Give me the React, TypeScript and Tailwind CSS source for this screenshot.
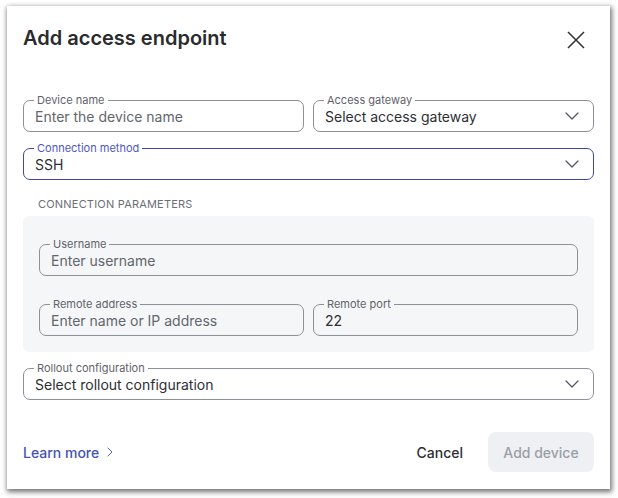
import { ChevronDown, ChevronRight } from 'lucide-react';

type FieldProps = {
  label: string;
  text: string;
  placeholder?: boolean;
  select?: boolean;
  focused?: boolean;
  bg?: string;
};

function Field({ label, text, placeholder, select, focused, bg = 'bg-white' }: FieldProps) {
  return (
    <div
      className={`relative h-8 rounded-[7px] border flex items-center pl-[11px] pr-[9px] ${
        focused ? 'border-[#3e47a6] border-[1.5px]' : 'border-[#8d9096]'
      }`}
    >
      <span
        className={`absolute left-[10px] top-[-7px] px-[3px] text-[11px] leading-[12px] ${bg} ${
          focused ? 'text-[#4d57c4]' : 'text-[#5f636a]'
        }`}
      >
        {label}
      </span>
      <span
        className={`flex-1 text-[14px] mt-[1px] ${
          placeholder ? 'text-[#62666d]' : 'text-[#2d2f33]'
        }`}
      >
        {text}
      </span>
      {select && <ChevronDown size={24} strokeWidth={1.25} className="text-[#55585e]" />}
    </div>
  );
}

export default function App() {
  return (
    <div
      className="w-[618px] h-[498px] bg-white pt-[6px] pl-[7px]"
      style={{ fontFamily: 'Inter, "Noto Sans", sans-serif' }}
    >
      <div className="w-[603px] h-[483px] bg-white px-4 flex flex-col shadow-[1px_2px_5px_1px_rgba(0,0,0,0.55)]">
        <div className="pt-[18px] h-[46px] flex items-center justify-between">
          <h2 className="text-[20px] leading-[28px] font-semibold text-[#2a2b2e]">
            Add access endpoint
          </h2>
          <button className="mr-[9px] mt-[4px] text-[#333538]">
            <svg width="18" height="18" viewBox="0 0 18 18" fill="none" stroke="currentColor" strokeWidth="1.6">
              <path d="M1 1 17 17M17 1 1 17" />
            </svg>
          </button>
        </div>

        <div className="mt-12 grid grid-cols-2 gap-[9px]">
          <Field label="Device name" text="Enter the device name" placeholder />
          <Field label="Access gateway" text="Select access gateway" select />
        </div>

        <div className="mt-4">
          <Field label="Connection method" text="SSH" select focused />
        </div>

        <p className="mt-[18px] pl-[15px] text-[11px] leading-[12px] text-[#6b6f76] tracking-[0.2px]">
          CONNECTION PARAMETERS
        </p>

        <div className="mt-[6px] rounded-md bg-[#f5f6f8] px-4 pt-[28px] pb-4 flex flex-col gap-7">
          <Field label="Username" text="Enter username" placeholder bg="bg-[#f5f6f8]" />
          <div className="grid grid-cols-2 gap-[9px]">
            <Field label="Remote address" text="Enter name or IP address" placeholder bg="bg-[#f5f6f8]" />
            <Field label="Remote port" text="22" bg="bg-[#f5f6f8]" />
          </div>
        </div>

        <div className="mt-4">
          <Field label="Rollout configuration" text="Select rollout configuration" select />
        </div>

        <div className="mt-8 flex items-center">
          <a className="flex items-center gap-[3px] text-[14px] font-medium text-[#4452b8]">
            Learn more
            <ChevronRight size={16} strokeWidth={1.5} className="text-[#5a63c0]" />
          </a>
          <div className="ml-auto flex items-center">
            <button className="mr-[25px] text-[14px] font-medium text-[#2d2f33]">Cancel</button>
            <button className="h-10 w-[106px] rounded-lg bg-[#eff0f3] text-[14px] font-medium text-[#9a9fa7]">
              Add device
            </button>
          </div>
        </div>
      </div>
    </div>
  );
}
